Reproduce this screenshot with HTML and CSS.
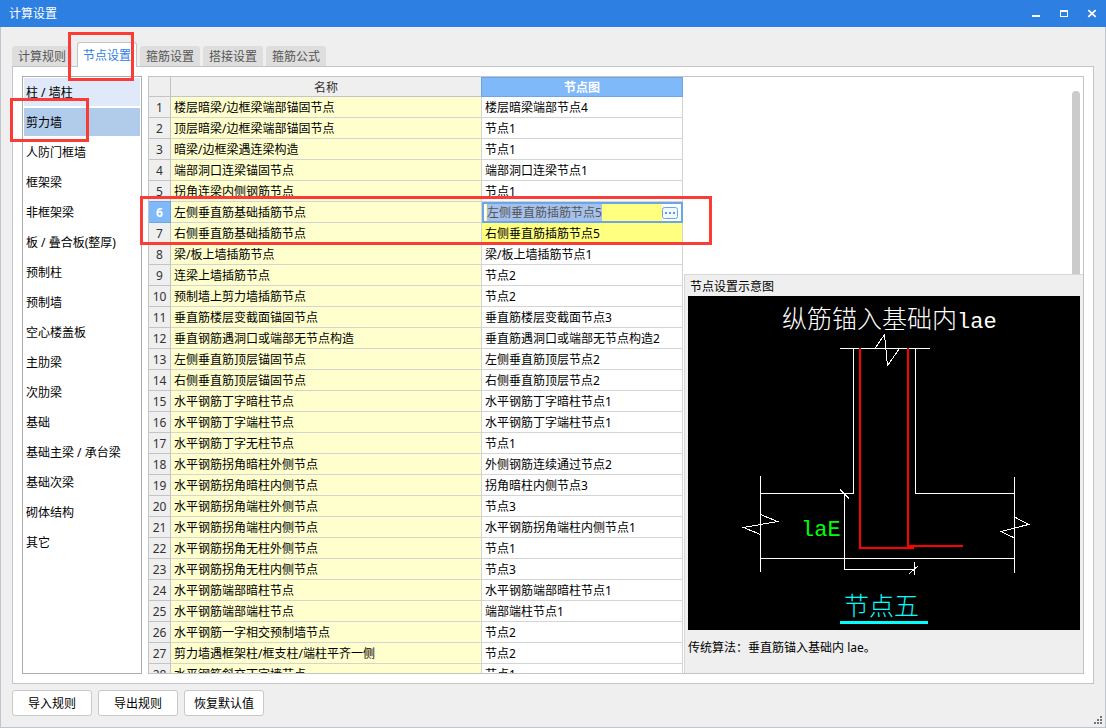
FILE: index.html
```html
<!DOCTYPE html>
<html lang="zh-CN">
<head>
<meta charset="utf-8">
<title>计算设置</title>
<link rel="stylesheet" href="styles.css">
</head>
<body>
<div class="window">
  <header class="titlebar">
    <h1 class="title">计算设置</h1>
    <div class="window-controls">
      <button type="button" class="window-btn" aria-label="最小化"><svg width="10" height="10" viewBox="0 0 10 10"><path d="M1 7h8v2H1z" fill="#fff"/></svg></button>
      <button type="button" class="window-btn" aria-label="最大化"><svg width="10" height="10" viewBox="0 0 10 10"><path d="M1 2h8v7H1zM2 4v4h6V4z" fill="#fff" fill-rule="evenodd"/></svg></button>
      <button type="button" class="window-btn" aria-label="关闭"><svg width="10" height="10" viewBox="0 0 10 10"><path d="M1.300 2.200l7.400 6.600M8.700 2.200l-7.400 6.600" stroke="#fff" stroke-width="1.800" fill="none"/></svg></button>
    </div>
  </header>
  <main class="content">
    <nav class="tabs">
      <button type="button" class="tab">计算规则</button>
      <button type="button" class="tab tab-active">节点设置</button>
      <button type="button" class="tab">箍筋设置</button>
      <button type="button" class="tab">搭接设置</button>
      <button type="button" class="tab">箍筋公式</button>
    </nav>
    <section class="panel">
      <div class="sidebar">
        <button type="button" class="side-item side-hover">柱 / 墙柱</button>
        <button type="button" class="side-item side-active">剪力墙</button>
        <button type="button" class="side-item">人防门框墙</button>
        <button type="button" class="side-item">框架梁</button>
        <button type="button" class="side-item">非框架梁</button>
        <button type="button" class="side-item">板 / 叠合板(整厚)</button>
        <button type="button" class="side-item">预制柱</button>
        <button type="button" class="side-item">预制墙</button>
        <button type="button" class="side-item">空心楼盖板</button>
        <button type="button" class="side-item">主肋梁</button>
        <button type="button" class="side-item">次肋梁</button>
        <button type="button" class="side-item">基础</button>
        <button type="button" class="side-item">基础主梁 / 承台梁</button>
        <button type="button" class="side-item">基础次梁</button>
        <button type="button" class="side-item">砌体结构</button>
        <button type="button" class="side-item">其它</button>
      </div>
      <div class="workspace">
        <div class="table-area">
          <table class="grid">
            <colgroup><col class="col-num"><col class="col-name"><col class="col-node"></colgroup>
            <thead><tr><th></th><th>名称</th><th class="head-active">节点图</th></tr></thead>
            <tbody>
              <tr><th>1</th><td>楼层暗梁/边框梁端部锚固节点</td><td>楼层暗梁端部节点4</td></tr>
              <tr><th>2</th><td>顶层暗梁/边框梁端部锚固节点</td><td>节点1</td></tr>
              <tr><th>3</th><td>暗梁/边框梁遇连梁构造</td><td>节点1</td></tr>
              <tr><th>4</th><td>端部洞口连梁锚固节点</td><td>端部洞口连梁节点1</td></tr>
              <tr><th>5</th><td>拐角连梁内侧钢筋节点</td><td>节点1</td></tr>
              <tr><th class="num-active">6</th><td>左侧垂直筋基础插筋节点</td><td class="editing"><div class="editor"><input id="node-value" class="editor-input" type="text" aria-label="节点图" value="左侧垂直筋插筋节点5"><button type="button" class="editor-more" aria-label="选择节点"><svg width="16" height="12" viewBox="0 0 16 12"><rect x=".5" y=".5" width="15" height="11" rx="2" fill="#f3f8fe" stroke="#6ba6df"/><path d="M3 5h2v2H3zM7 5h2v2H7zM11 5h2v2h-2z" fill="#5b9bdc"/></svg></button></div></td></tr>
              <tr><th>7</th><td>右侧垂直筋基础插筋节点</td><td class="changed">右侧垂直筋插筋节点5</td></tr>
              <tr><th>8</th><td>梁/板上墙插筋节点</td><td>梁/板上墙插筋节点1</td></tr>
              <tr><th>9</th><td>连梁上墙插筋节点</td><td>节点2</td></tr>
              <tr><th>10</th><td>预制墙上剪力墙插筋节点</td><td>节点2</td></tr>
              <tr><th>11</th><td>垂直筋楼层变截面锚固节点</td><td>垂直筋楼层变截面节点3</td></tr>
              <tr><th>12</th><td>垂直钢筋遇洞口或端部无节点构造</td><td>垂直筋遇洞口或端部无节点构造2</td></tr>
              <tr><th>13</th><td>左侧垂直筋顶层锚固节点</td><td>左侧垂直筋顶层节点2</td></tr>
              <tr><th>14</th><td>右侧垂直筋顶层锚固节点</td><td>右侧垂直筋顶层节点2</td></tr>
              <tr><th>15</th><td>水平钢筋丁字暗柱节点</td><td>水平钢筋丁字暗柱节点1</td></tr>
              <tr><th>16</th><td>水平钢筋丁字端柱节点</td><td>水平钢筋丁字端柱节点1</td></tr>
              <tr><th>17</th><td>水平钢筋丁字无柱节点</td><td>节点1</td></tr>
              <tr><th>18</th><td>水平钢筋拐角暗柱外侧节点</td><td>外侧钢筋连续通过节点2</td></tr>
              <tr><th>19</th><td>水平钢筋拐角暗柱内侧节点</td><td>拐角暗柱内侧节点3</td></tr>
              <tr><th>20</th><td>水平钢筋拐角端柱外侧节点</td><td>节点3</td></tr>
              <tr><th>21</th><td>水平钢筋拐角端柱内侧节点</td><td>水平钢筋拐角端柱内侧节点1</td></tr>
              <tr><th>22</th><td>水平钢筋拐角无柱外侧节点</td><td>节点1</td></tr>
              <tr><th>23</th><td>水平钢筋拐角无柱内侧节点</td><td>节点3</td></tr>
              <tr><th>24</th><td>水平钢筋端部暗柱节点</td><td>水平钢筋端部暗柱节点1</td></tr>
              <tr><th>25</th><td>水平钢筋端部端柱节点</td><td>端部端柱节点1</td></tr>
              <tr><th>26</th><td>水平钢筋一字相交预制墙节点</td><td>节点2</td></tr>
              <tr><th>27</th><td>剪力墙遇框架柱/框支柱/端柱平齐一侧</td><td>节点2</td></tr>
              <tr><th>28</th><td>水平钢筋斜交丁字墙节点</td><td>节点1</td></tr>
            </tbody>
          </table>
        </div>
        <div class="side-view">
          <div class="scroll-area"><div class="scroll-thumb"></div></div>
          <section class="preview">
            <h2 class="preview-title">节点设置示意图</h2>
            <svg class="diagram" viewBox="0 0 392 334" role="img" aria-label="节点五">
              <rect width="392" height="334" fill="#000"/>
              <g fill="none" stroke="#fff" shape-rendering="crispEdges">
                <path d="M152 52.500H242M165.500 52.500V197.500H72.500M227.500 52.500V197.500H326.500M72.500 180V276M326.500 181V277M72.500 262.500H326.500M156.500 197.500V273.500H226.500M226.500 266V279"/>
                <path d="M187 52.500L196.500 38.500L199.500 69.500L211.500 52.500M72.500 218.500L89.500 225.500L55.500 231.500L72.500 238.500M326.500 221L340.500 228.500L313 235.500L326.500 242M152 193.500L161 202.500M221.500 277.500L230.500 269.500"/>
              </g>
              <path d="M172 52V252H226M220 52V250H275" fill="none" stroke="#f00" stroke-width="2"/>
              <text class="cad" x="94" y="32" fill="#fff">纵筋锚入基础内<tspan class="cad-latin">lae</tspan></text>
              <text class="cad-latin" x="113" y="240" fill="#0f0">laE</text>
              <text class="cad" x="156" y="319" fill="#0ff">节点五</text>
              <path d="M152 325h88v3h-88z" fill="#0ff"/>
            </svg>
            <p class="preview-note">传统算法<span class="wide-colon">：</span>垂直筋锚入基础内 lae。</p>
          </section>
        </div>
      </div>
    </section>
    <footer class="actions">
      <button type="button" class="action">导入规则</button>
      <button type="button" class="action">导出规则</button>
      <button type="button" class="action">恢复默认值</button>
    </footer>
  </main>
  <svg class="grip" width="8" height="8" viewBox="0 0 8 8"><path d="M6 0h2v2H6zM3 3h2v2H3zM6 3h2v2H6zM0 6h2v2H0zM3 6h2v2H3zM6 6h2v2H6z" fill="#707780"/></svg>
  <div class="mark mark-tab"></div>
  <div class="mark mark-side"></div>
  <div class="mark mark-rows"></div>
</div>
<script src="script.js"></script>
</body>
</html>
```
FILE: styles.css
```css
* { box-sizing: border-box; }

body {
  margin: 0;
  font: 12px/18px "Noto Sans", "Noto Sans CJK SC", sans-serif;
  color: #000;
}

button, input {
  font: inherit;
  color: inherit;
  margin: 0;
  padding: 0;
  border: 0;
  background: none;
}

.window {
  position: relative;
  display: flex;
  flex-direction: column;
  height: 100vh;
  background: #efefef;
}

.titlebar {
  display: flex;
  justify-content: space-between;
  align-items: flex-start;
  height: 27px;
  padding: 0 8px 0 9px;
  background: #2d80e2;
  color: #fff;
}

.title { margin: 0; padding-top: 5px; font-size: 12px; font-weight: 400; }
.window-controls { display: flex; gap: 16px; padding-top: 8px; }
.window-btn { display: flex; align-items: center; justify-content: center; width: 12px; height: 10px; }

.content {
  flex: 1;
  min-height: 0;
  display: flex;
  flex-direction: column;
  padding: 15px 11px 11px;
  border: 1px solid #bec5d0;
  border-top: 0;
}

.tabs { display: flex; align-items: flex-end; gap: 3px; }

.tab {
  width: 60px;
  height: 20px;
  padding-top: 2px;
  border-radius: 3px 3px 0 0;
  background: #dedede;
  color: #555;
}

.tab-active {
  position: relative;
  height: 25px;
  margin: 0 0 -1px 2px;
  border: 1px solid #c3c4ca;
  border-bottom: 0;
  background: #fff;
  color: #2d80e2;
}

.panel {
  flex: 1;
  min-height: 0;
  display: flex;
  gap: 6px;
  padding: 9px;
  border: 1px solid #c3c4ca;
  background: #fff;
}

.sidebar {
  width: 120px;
  display: flex;
  flex-direction: column;
  gap: 2px;
  padding: 1px;
  border: 1px solid #acacac;
}

.side-item { height: 28px; padding: 2px 2px 0; text-align: left; white-space: nowrap; }
.side-hover { background: #dfe9f9; }
.side-active { background: #b1cbeb; }

.workspace {
  flex: 1;
  min-width: 0;
  display: flex;
  border: 1px solid #c3c4c6;
}

.table-area { overflow: hidden; }

.grid { width: 534px; table-layout: fixed; border-collapse: separate; border-spacing: 0; }
.col-num { width: 22px; }
.col-name { width: 311px; }
.col-node { width: 201px; }

.grid th, .grid td {
  height: 21px;
  padding: 2px 3px 0;
  border: solid #d4d4d4;
  border-width: 0 1px 1px 0;
  text-align: left;
  font-weight: 400;
  white-space: nowrap;
}

.grid th {
  padding: 2px 0 0;
  border-color: #c3c4c6;
  background: #efefef;
  color: #333;
  text-align: center;
}

.grid thead th { height: 20px; line-height: 17px; }
.grid td:nth-child(2) { background: #ffffcd; }

.grid .head-active, .grid .num-active {
  background: #80b9fa;
  border-color: #6ba6e6;
  color: #fff;
  font-weight: 700;
}

.grid .head-active { box-shadow: inset 0 1px #6ba6e6, -1px 0 #6ba6e6; }
.grid .num-active { box-shadow: 0 -1px #6ba6e6; }
.grid .changed { background: #ffff80; }
.grid .editing { padding: 0; border: 0; }

.editor {
  display: flex;
  align-items: center;
  height: 21px;
  padding-right: 3px;
  border: 2px solid #6ba6e6;
}

.editor-input {
  flex: 1;
  min-width: 0;
  height: 17px;
  margin-left: 2px;
  padding-left: 1px;
  background: #ffff80;
  color: #555;
  line-height: 17px;
  outline: 0;
}

.editor-input::selection { background: #a5c1ec; color: #555; }
.editor-more { display: flex; }

.side-view { flex: 1; min-width: 0; display: flex; flex-direction: column; padding-left: 1px; }

.scroll-area {
  flex: 1;
  display: flex;
  justify-content: flex-end;
  padding: 14px 3px 0 0;
}

.scroll-thumb { width: 8px; border-radius: 4px 4px 0 0; background: #cbcbcb; }

.preview {
  height: 399px;
  border: solid #d8d8d8;
  border-width: 1px 0 0 1px;
  padding: 0 3px;
  background: #efefef;
}

.preview-title { margin: 0; padding: 3px 0 0 2px; font-size: 12px; font-weight: 400; }
.diagram { display: block; width: 100%; }
.preview-note { margin: 8px 0 0; }
.wide-colon { font-family: "Noto Sans CJK TC", sans-serif; }
.cad { font: 300 25px "Noto Sans CJK SC", sans-serif; }
.cad-latin { font: 22px "Liberation Mono", monospace; }

.actions { display: flex; gap: 6px; padding-top: 6px; }
.action { width: 80px; height: 26px; padding-top: 2px; border: 1px solid #c8c8c8; border-radius: 3px; background: #fff; }

.grip { position: absolute; right: 4px; bottom: 4px; }

.mark { position: absolute; border: 3px solid #fb3b36; pointer-events: none; }
.mark-tab { left: 68px; top: 32px; width: 66px; height: 49px; }
.mark-side { left: 10px; top: 98px; width: 79px; height: 44px; }
.mark-rows { left: 140px; top: 196px; width: 572px; height: 49px; }
```
FILE: script.js
```js
const nodeValue = document.getElementById("node-value");
nodeValue.focus();
nodeValue.select();
```
